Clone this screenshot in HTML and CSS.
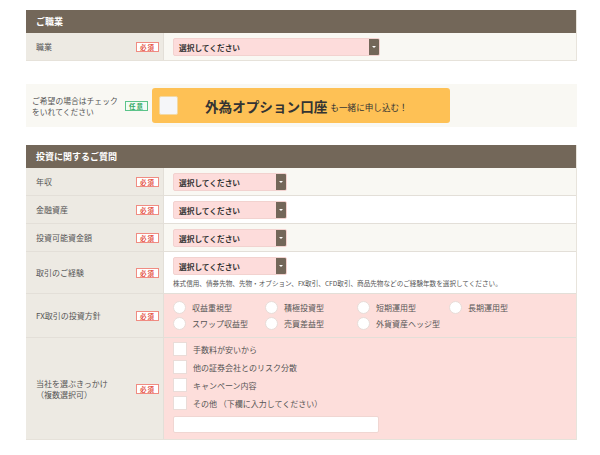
FILE: index.html
```html
<!DOCTYPE html>
<html lang="ja">
<head>
    <meta charset="UTF-8">
    <meta name="viewport" content="width=device-width, initial-scale=1.0">
    <title>口座開設 お客様情報</title>
    <link rel="stylesheet" href="styles.css">
</head>
<body>
    <div class="form">
        <section class="block">
            <h2 class="block-title">ご職業</h2>
            <div class="row">
                <div class="label"><span>職業</span><span class="badge">必須</span></div>
                <div class="field field-light">
                    <div class="select select-wide"><span>選択してください</span><span class="arrow"></span></div>
                </div>
            </div>
        </section>

        <div class="option">
            <p class="option-text">ご希望の場合はチェック<br>をいれてください</p>
            <span class="badge badge-any">任意</span>
            <label class="option-btn">
                <span class="option-check"></span>
                <strong>外為オプション口座</strong>
                <small>も一緒に申し込む！</small>
            </label>
        </div>

        <section class="block">
            <h2 class="block-title">投資に関するご質問</h2>
            <div class="row">
                <div class="label"><span>年収</span><span class="badge">必須</span></div>
                <div class="field field-light">
                    <div class="select"><span>選択してください</span><span class="arrow"></span></div>
                </div>
            </div>
            <div class="row">
                <div class="label"><span>金融資産</span><span class="badge">必須</span></div>
                <div class="field">
                    <div class="select"><span>選択してください</span><span class="arrow"></span></div>
                </div>
            </div>
            <div class="row">
                <div class="label"><span>投資可能資金額</span><span class="badge">必須</span></div>
                <div class="field field-light">
                    <div class="select"><span>選択してください</span><span class="arrow"></span></div>
                </div>
            </div>
            <div class="row">
                <div class="label"><span>取引のご経験</span><span class="badge">必須</span></div>
                <div class="field">
                    <div class="select"><span>選択してください</span><span class="arrow"></span></div>
                    <p class="note">株式信用、債券先物、先物・オプション、FX取引、CFD取引、商品先物などのご経験年数を選択してください。</p>
                </div>
            </div>
            <div class="row">
                <div class="label"><span>FX取引の投資方針</span><span class="badge">必須</span></div>
                <div class="field field-pink">
                    <div class="radios">
                        <label class="choice"><span class="radio"></span>収益重視型</label>
                        <label class="choice"><span class="radio"></span>積極投資型</label>
                        <label class="choice"><span class="radio"></span>短期運用型</label>
                        <label class="choice"><span class="radio"></span>長期運用型</label>
                        <label class="choice"><span class="radio"></span>スワップ収益型</label>
                        <label class="choice"><span class="radio"></span>売買差益型</label>
                        <label class="choice"><span class="radio"></span>外貨資産ヘッジ型</label>
                    </div>
                </div>
            </div>
            <div class="row">
                <div class="label"><span>当社を選ぶきっかけ<br>（複数選択可）</span><span class="badge">必須</span></div>
                <div class="field field-pink field-checks">
                    <label class="choice"><span class="check"></span>手数料が安いから</label>
                    <label class="choice"><span class="check"></span>他の証券会社とのリスク分散</label>
                    <label class="choice"><span class="check"></span>キャンペーン内容</label>
                    <label class="choice"><span class="check"></span>その他 （下欄に入力してください）</label>
                    <input class="text-input" type="text">
                </div>
            </div>
        </section>
    </div>
</body>
</html>
```

FILE: styles.css
```css
:root {
    --brown: #736759;
    --label-bg: #edeae3;
    --light-bg: #f9f8f3;
    --pink: #fddedb;
    --line: #e3dfd8;
}

body {
    margin: 0;
    background: #fff;
    color: #555;
    font-family: "Noto Sans CJK JP", "Liberation Sans", sans-serif;
}

.form {
    width: 551px;
    margin: 10px 0 0 26px;
}

.block {
    border-right: 1px solid #e8e4dc;
    border-bottom: 1px solid #e6e2da;
}

.block-title {
    margin: 0;
    height: 23px;
    line-height: 23px;
    padding-left: 10px;
    background: var(--brown);
    color: #fff;
    font-size: 9px;
    font-weight: bold;
}

.row {
    display: flex;
    border-top: 1px solid var(--line);
}

.block-title + .row {
    border-top: none;
}

.label {
    width: 138px;
    box-sizing: border-box;
    flex-shrink: 0;
    display: flex;
    align-items: center;
    justify-content: space-between;
    padding: 0 4px 0 10px;
    background: var(--label-bg);
    border-right: 1px solid var(--line);
    font-size: 8px;
    line-height: 11px;
}

.badge {
    width: 23px;
    height: 10px;
    box-sizing: border-box;
    flex-shrink: 0;
    border: 1px solid #f08c82;
    background: #fff;
    color: #e4564a;
    font-size: 6.5px;
    line-height: 8px;
    text-align: center;
    letter-spacing: 1px;
    font-weight: bold;
}

.badge-any {
    border-color: #5cc48a;
    color: #2fa862;
    background: #f2fbf5;
}

.field {
    flex: 1;
    padding: 5px 9px 4px;
    background: #fff;
}

.field-light {
    background: var(--light-bg);
}

.field-pink {
    background: var(--pink);
}

.select {
    width: 114px;
    height: 18px;
    box-sizing: border-box;
    display: flex;
    align-items: center;
    justify-content: space-between;
    border: 1px solid #f2d2cf;
    border-radius: 2px;
    background: #fddcdb;
    color: #333;
    font-size: 7.7px;
    font-weight: bold;
    padding-left: 5px;
    overflow: hidden;
}

.select-wide {
    width: 207px;
}

.arrow {
    width: 10px;
    height: 18px;
    background: var(--brown);
    position: relative;
}

.arrow::after {
    content: "";
    position: absolute;
    left: 3px;
    top: 8px;
    border-left: 2px solid transparent;
    border-right: 2px solid transparent;
    border-top: 2px solid #fff;
}

.note {
    margin: 4px 0 1px;
    font-size: 6.6px;
    line-height: 9px;
    color: #555;
    white-space: nowrap;
}

.option {
    display: flex;
    align-items: center;
    margin: 23px 0 18px;
    height: 43px;
    padding-left: 6px;
    background: var(--light-bg);
}

.option-text {
    margin: 0;
    width: 93px;
    flex-shrink: 0;
    font-size: 7.8px;
    line-height: 11px;
}

.option .badge-any {
    margin-right: 4px;
}

.option-btn {
    display: flex;
    align-items: center;
    width: 298px;
    height: 35px;
    box-sizing: border-box;
    padding-left: 7px;
    border-radius: 3px;
    background: #fec155;
    color: #333;
}

.option-check {
    width: 19px;
    height: 19px;
    box-sizing: border-box;
    border: 1px solid #f3d9a4;
    border-radius: 2px;
    background: #f5f6f9;
    margin-right: 27px;
}

.option-btn strong {
    font-size: 13.6px;
}

.option-btn small {
    font-size: 8.6px;
    margin-left: 3px;
    padding-top: 2px;
}

.radios {
    display: grid;
    grid-template-columns: repeat(4, 92px);
}

.choice {
    display: flex;
    align-items: center;
    height: 16px;
    font-size: 8px;
    color: #555;
    white-space: nowrap;
}

.field-pink {
    padding-bottom: 6px;
}

.radio {
    width: 13px;
    height: 13px;
    box-sizing: border-box;
    border: 1px solid #e8dcd8;
    border-radius: 50%;
    background: #fff;
    margin-right: 6px;
}

.field-checks {
    padding-top: 2px;
}

.field-checks .choice {
    height: 18px;
}

.check {
    width: 14px;
    height: 14px;
    box-sizing: border-box;
    border: 1px solid #eadcd8;
    background: #fff;
    margin-right: 6px;
}

.text-input {
    display: block;
    width: 206px;
    height: 17px;
    box-sizing: border-box;
    margin-top: 4px;
    border: 1px solid #f0d6d2;
    border-radius: 2px;
    background: #fff;
}
```
